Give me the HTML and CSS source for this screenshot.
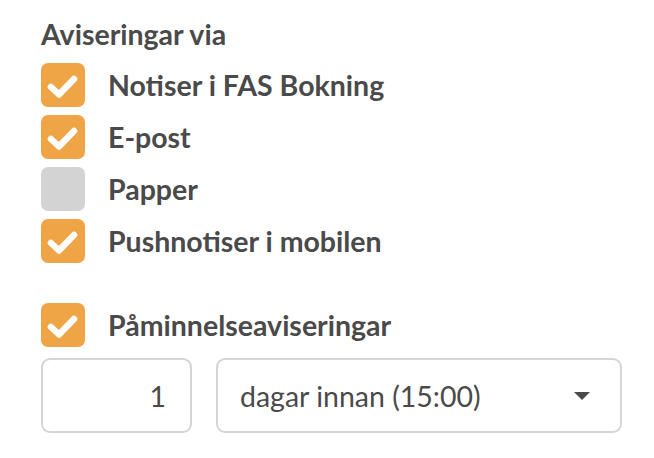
FILE: index.html
```html
<!DOCTYPE html>
<html lang="sv">
<head>
<meta charset="utf-8">
<link rel="stylesheet" href="styles.css">
</head>
<body>
<div class="panel">
  <h2 class="heading">Aviseringar via</h2>
  <ul class="options">
    <li class="option"><span class="box checked"><svg viewBox="0 0 44 44"><path d="M10 24 L18 31.5 L33 16"/></svg></span><span class="label">Notiser i FAS Bokning</span></li>
    <li class="option"><span class="box checked"><svg viewBox="0 0 44 44"><path d="M10 24 L18 31.5 L33 16"/></svg></span><span class="label">E-post</span></li>
    <li class="option"><span class="box"></span><span class="label">Papper</span></li>
    <li class="option"><span class="box checked"><svg viewBox="0 0 44 44"><path d="M10 24 L18 31.5 L33 16"/></svg></span><span class="label">Pushnotiser i mobilen</span></li>
  </ul>
  <div class="option reminder"><span class="box checked"><svg viewBox="0 0 44 44"><path d="M10 24 L18 31.5 L33 16"/></svg></span><span class="label">Påminnelseaviseringar</span></div>
  <div class="fields">
    <div class="num">1</div>
    <div class="select"><span>dagar innan (15:00)</span><svg class="caret" viewBox="0 0 16 8"><path d="M0 0 H16 L8 8 Z"/></svg></div>
  </div>
</div>
</body>
</html>
```
FILE: styles.css
```css
* { box-sizing: border-box; }
html, body { margin: 0; padding: 0; background: #fff; }
body { font-family: Lato, "Noto Sans", sans-serif; color: #4a4a4a; }
.panel { padding: 16px 0 0 41px; width: 622px; }
.heading { margin: 0; font-size: 28.5px; font-weight: 700; line-height: 36px; color: #4a4a4a; }
.options { list-style: none; margin: 11px 0 0; padding: 0; display: flex; flex-direction: column; gap: 8px; }
.option { display: flex; align-items: center; gap: 23px; }
.box { width: 44px; height: 44px; border-radius: 7px; background: #d3d3d3; flex: none; display: flex; }
.box.checked { background: #efa446; }
.box svg { width: 44px; height: 44px; }
.box path { fill: none; stroke: #fff; stroke-width: 6.5; stroke-linecap: round; stroke-linejoin: round; }
.label { font-size: 28.5px; font-weight: 700; color: #4a4a4a; line-height: 44px; }
.reminder { margin-top: 40px; }
.fields { display: flex; gap: 24px; margin-top: 11px; }
.num { width: 151px; height: 75px; border: 2px solid #d5d5d5; border-radius: 9px; display: flex; align-items: center; justify-content: flex-end; padding-right: 24px; font-size: 28.5px; color: #4a4a4a; }
.select { width: 406px; height: 75px; border: 2px solid #d5d5d5; border-radius: 9px; display: flex; align-items: center; justify-content: space-between; padding: 0 30px 0 22px; font-size: 28.5px; color: #4a4a4a; }
.caret { width: 16px; height: 8px; }
.caret path { fill: #4a4a4a; }
```
